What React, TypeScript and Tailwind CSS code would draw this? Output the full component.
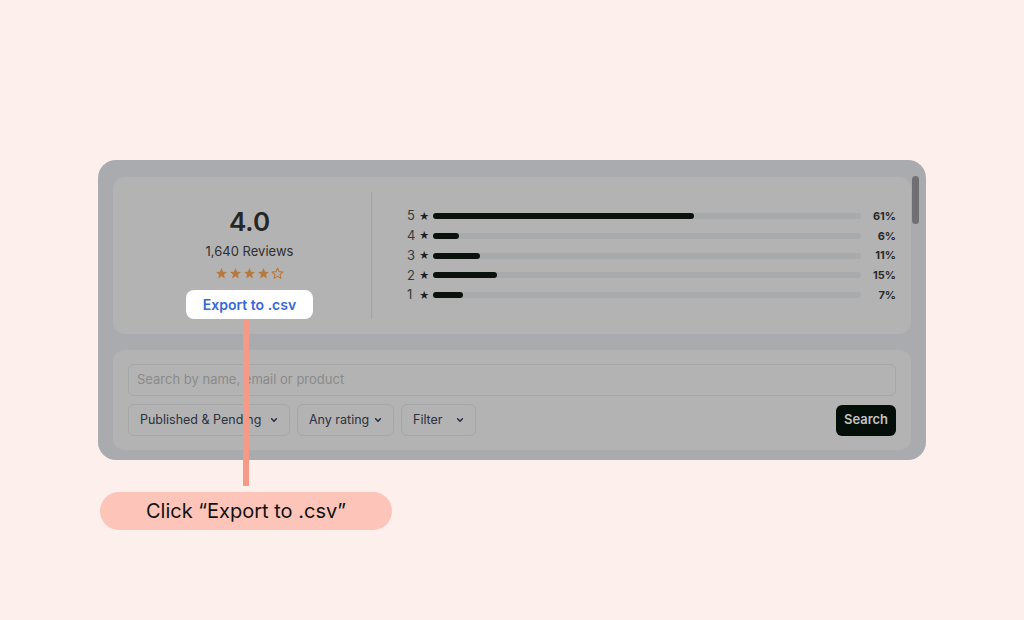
import React from "react";

const rows = [
	{ n: 5, pct: 61 },
	{ n: 4, pct: 6 },
	{ n: 3, pct: 11 },
	{ n: 2, pct: 15 },
	{ n: 1, pct: 7 },
];

function Star({ filled }: { filled: boolean }) {
	return (
		<svg width="13" height="13" viewBox="0 0 24 24">
			<polygon
				points="12,2 14.9,8.6 22,9.3 16.6,14 18.2,21 12,17.3 5.8,21 7.4,14 2,9.3 9.1,8.6"
				fill={filled ? "#b8793a" : "none"}
				stroke="#b8793a"
				strokeWidth={filled ? 0 : 2}
				strokeLinejoin="round"
			/>
		</svg>
	);
}

function Chevron() {
	return (
		<svg width="8" height="8" viewBox="0 0 10 10" className="shrink-0">
			<path d="M2 3.5 L5 6.5 L8 3.5" fill="none" stroke="#1f2937" strokeWidth="1.8" strokeLinecap="round" strokeLinejoin="round" />
		</svg>
	);
}

function Dropdown({ label, width }: { label: string; width: string }) {
	return (
		<div className={`${width} h-8 flex items-center justify-between pl-[11px] pr-[11px] rounded-md border border-[#a6a7a9] text-[12.5px] text-[#2b3240]`}>
			<span className="whitespace-nowrap">{label}</span>
			<Chevron />
		</div>
	);
}

export default function App() {
	return (
		<div className="relative min-h-screen bg-[#fdefeb] flex flex-col items-center pt-[160px] font-['Inter',sans-serif]">
			<div className="relative w-[828px] h-[300px] rounded-[18px] bg-[#a9abae] pt-[17px] px-[15px] pb-[10px] flex flex-col gap-4">
				{/* summary card */}
				<div className="h-[157px] rounded-xl bg-[#b3b3b3] flex py-[15px]">
					<div className="w-[259px] pl-[15px] border-r border-[#a4a4a4] flex flex-col items-center">
						<div className="mt-[14px] text-[26px] leading-[32px] font-semibold text-[#262626]">4.0</div>
						<div className="mt-1 text-[13px] leading-[18px] text-[#2f2f2f]">1,640 Reviews</div>
						<div className="mt-[6px] h-4 flex items-center gap-[1px]">
							<Star filled />
							<Star filled />
							<Star filled />
							<Star filled />
							<Star filled={false} />
						</div>
						<div className="mt-2 w-[127px] h-[30px] rounded-lg bg-white flex items-center justify-center text-[14px] font-semibold text-[#3569d9]">
							Export to .csv
						</div>
					</div>
					<div className="flex-1 flex flex-col justify-center pl-[35px] pr-[15px]">
						{rows.map((r) => (
							<div key={r.n} className="h-[19.75px] flex items-center">
								<span className="w-[12px] text-[13px] text-[#3a3a3a]">{r.n}</span>
								<span className="w-[14px] text-[10px] text-[#1e1e1e]">★</span>
								<div className="w-[428px] h-[6px] rounded-sm bg-[#a9aaac]">
									<div className="h-full rounded-sm bg-[#0b110d]" style={{ width: `${r.pct}%` }} />
								</div>
								<span className="flex-1 text-right text-[11px] font-bold text-[#2a2a2a]">{r.pct}%</span>
							</div>
						))}
					</div>
				</div>

				{/* search card */}
				<div className="h-[100px] rounded-xl bg-[#b3b3b3] px-[15px] pt-[14px] flex flex-col gap-2">
					<div className="h-8 rounded-md border border-[#a6a7a9] flex items-center px-2 text-[13px] text-[#8a8a8a]">
						Search by name, email or product
					</div>
					<div className="flex items-center gap-[7px]">
						<Dropdown label="Published & Pending" width="w-[162px]" />
						<Dropdown label="Any rating" width="w-[97px]" />
						<Dropdown label="Filter" width="w-[75px]" />
						<div className="ml-auto w-[60px] h-[31px] rounded-md bg-[#050f0a] flex items-center justify-center text-[13px] font-semibold text-[#c2c2c2]">
							Search
						</div>
					</div>
				</div>

				<div className="absolute right-[7px] top-4 w-[7px] h-12 rounded-full bg-[#6f7073]" />
			</div>

			<div className="w-[828px] mt-8">
				<div className="ml-[2px] w-[292px] h-[38px] rounded-full bg-[#fdc5b9] flex items-center justify-center text-[20px] text-[#111]">
					Click “Export to .csv”
				</div>
			</div>

			<div className="absolute left-[243px] top-[320px] w-[6px] h-[166px] bg-[#f59a86]" />
		</div>
	);
}
